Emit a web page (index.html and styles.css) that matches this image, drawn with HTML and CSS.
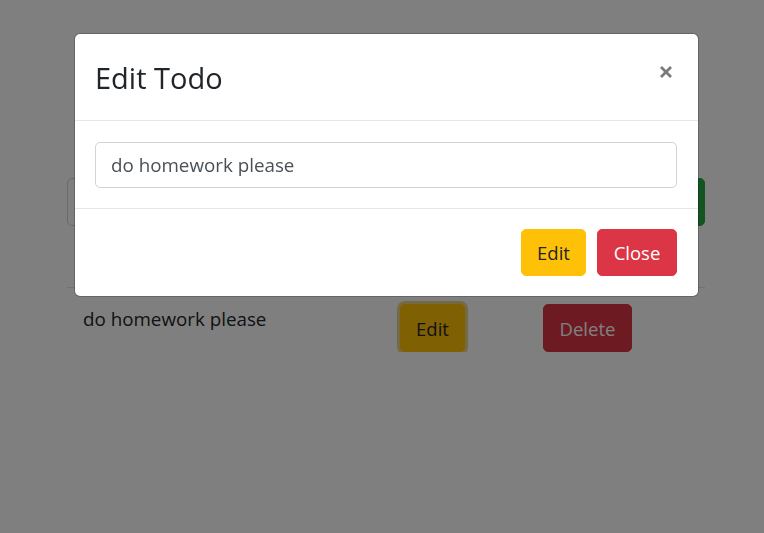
FILE: index.html
```html
<!DOCTYPE html>
<html lang="en">
<head>
<meta charset="utf-8">
<title>Edit Todo</title>
<link rel="stylesheet" href="styles.css">
</head>
<body>
<div class="app">
  <div class="add-row">
    <input class="add-input" type="text" value="">
    <button class="btn btn-success add-btn">Add</button>
  </div>
  <hr class="divider">
  <div class="todo-row">
    <div class="todo-text">do homework please</div>
    <div><button class="btn btn-warning btn-edit focused">Edit</button></div>
    <div><button class="btn btn-danger btn-delete">Delete</button></div>
  </div>
</div>
<div class="backdrop"></div>
<div class="modal">
  <div class="modal-header">
    <h4 class="modal-title">Edit Todo</h4>
    <button class="close" aria-label="Close">
      <svg width="14" height="14" viewBox="0 0 14 14"><path d="M2 2 L12 12 M12 2 L2 12" stroke="#7a7a7a" stroke-width="2.8" stroke-linecap="butt"/></svg>
    </button>
  </div>
  <div class="modal-body">
    <input class="form-control" type="text" value="do homework please">
  </div>
  <div class="modal-footer">
    <button class="btn btn-warning btn-edit">Edit</button>
    <button class="btn btn-danger btn-close">Close</button>
  </div>
</div>
</body>
</html>
```

FILE: styles.css
```css
* { box-sizing: border-box; }
body {
  margin: 0;
  font-family: "Open Sans", "Noto Sans", sans-serif;
  color: #212529;
  background: #fff;
}
.app {
  padding: 178px 59px 0 67px;
}
.add-row {
  display: flex;
  height: 48px;
}
.add-input {
  flex: 1;
  border: 1px solid #ced4da;
  border-radius: 5px 0 0 5px;
  margin: 0;
}
.add-btn {
  width: 100px;
  border-radius: 0 5px 5px 0;
}
.divider {
  margin: 61px 0 0;
  border: 0;
  border-top: 1px solid rgba(0,0,0,.1);
  height: 0;
}
.todo-row {
  display: grid;
  grid-template-columns: 333px 143px auto;
  margin-top: 16px;
  align-items: start;
}
.todo-text {
  padding: 0 0 0 16px;
  font-size: 18.8px;
  line-height: 30px;
}
.btn {
  display: inline-flex;
  align-items: center;
  justify-content: center;
  border: 1px solid transparent;
  border-radius: 5px;
  font-family: inherit;
  font-size: 18.5px;
  padding: 0;
  margin: 0;
  cursor: pointer;
}
.btn-success { background: #28a745; border-color: #28a745; color: #fff; }
.btn-warning { background: #ffc107; border-color: #ffc107; color: #212529; }
.btn-danger { background: #dc3545; border-color: #dc3545; color: #fff; }
.todo-row .btn { height: 48px; }
.todo-row .btn-edit { width: 65px; }
.btn-delete { width: 89px; }
.focused { box-shadow: 0 0 0 3px rgba(222,170,12,.5); }

.backdrop {
  position: fixed;
  inset: 0;
  background: rgba(0,0,0,.5);
}
.modal {
  position: absolute;
  left: 74px;
  top: 33px;
  width: 625px;
  background: #fff;
  background-clip: padding-box;
  border: 1px solid rgba(0,0,0,.2);
  border-radius: 6px;
}
.modal-header {
  display: flex;
  justify-content: space-between;
  align-items: flex-start;
  padding: 21px 21px 20px 20px;
  border-bottom: 1px solid #e4e7ea;
}
.modal-title {
  margin: 0;
  font-size: 29px;
  font-weight: 500;
  line-height: 45px;
  color: #212529;
}
.close {
  border: 0;
  background: none;
  padding: 0;
  margin: 10px 4px 0 0;
  width: 14px;
  height: 14px;
  display: block;
  cursor: pointer;
}
.close svg { display: block; }
.modal-body {
  padding: 21px 21px 20px 20px;
}
.form-control {
  display: block;
  width: 100%;
  height: 46px;
  margin: 0;
  padding: 0 15px;
  border: 1px solid #ced4da;
  border-radius: 5px;
  font-family: inherit;
  font-size: 18.8px;
  color: #495057;
  background: #fff;
}
.modal-footer {
  display: flex;
  justify-content: flex-end;
  gap: 11px;
  padding: 20px 21px 20px 20px;
  border-top: 1px solid #e4e7ea;
}
.modal-footer .btn { height: 47px; }
.modal-footer .btn-edit { width: 65px; }
.btn-close { width: 80px; }
```
